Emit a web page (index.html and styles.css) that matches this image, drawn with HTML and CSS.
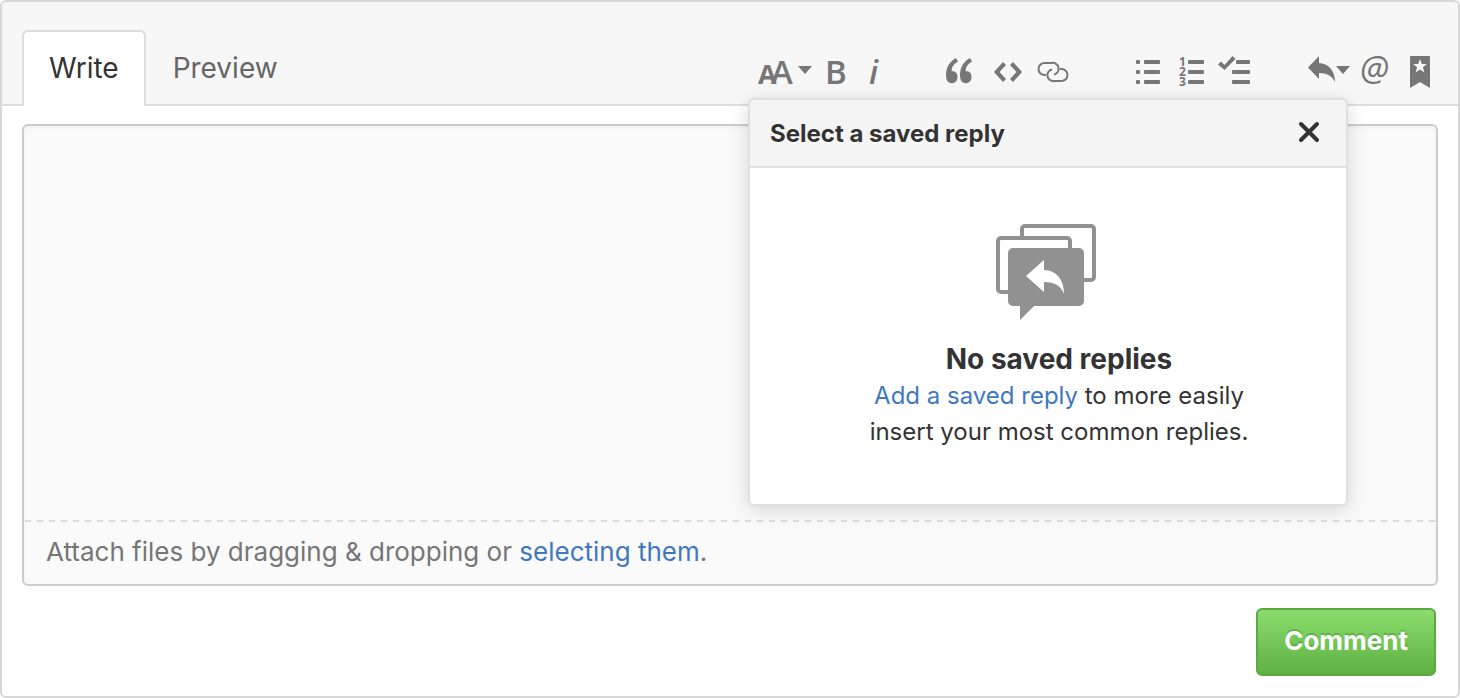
FILE: index.html
```html
<!DOCTYPE html>
<html lang="en">
<head>
<meta charset="utf-8">
<title>Comment</title>
<link rel="stylesheet" href="styles.css">
</head>
<body>
<form class="comment-box" onsubmit="return false">
  <header class="comment-head">
    <nav class="tabs">
      <button type="button" class="tab tab-active">Write</button>
      <button type="button" class="tab">Preview</button>
    </nav>
    <div class="toolbar">
      <div class="tool-group">
        <button type="button" class="tool" aria-label="Add header text">
          <svg width="60" height="40" viewBox="752 52 60 40"><text class="glyph glyph-small" x="758" y="84">A</text><text class="glyph glyph-large" x="771" y="84">A</text><path d="M798 66h14l-7 8z"/></svg>
        </button>
        <button type="button" class="tool" aria-label="Add bold text">
          <svg width="40" height="40" viewBox="812 52 40 40"><text class="glyph glyph-bold" x="825" y="84">B</text></svg>
        </button>
        <button type="button" class="tool" aria-label="Add italic text">
          <svg width="40" height="40" viewBox="852 52 40 40"><text class="glyph glyph-italic" x="869" y="84">i</text></svg>
        </button>
      </div>
      <div class="tool-group">
        <button type="button" class="tool" aria-label="Insert a quote">
          <svg width="46" height="40" viewBox="938 52 46 40"><path d="M956 58l2 3.500c-5 3-6.500 6-6.300 10 3.500-1 5.800 2 5.800 5.500 0 3.800-2.600 6.200-5.500 6.200-4 0-6-3-6-8 0-8 4-14 10-17.200zM970 58l2 3.500c-5 3-6.500 6-6.300 10 3.500-1 5.800 2 5.800 5.500 0 3.800-2.600 6.200-5.500 6.200-4 0-6-3-6-8 0-8 4-14 10-17.200z"/></svg>
        </button>
        <button type="button" class="tool" aria-label="Insert code">
          <svg width="46" height="40" viewBox="984 52 46 40"><path d="M1003 62l3 3-6.500 7 6.500 7-3 3-9-10zM1013 62l-3 3 6.500 7-6.500 7 3 3 9-10z"/></svg>
        </button>
        <button type="button" class="tool" aria-label="Add a link">
          <svg width="46" height="40" viewBox="1030 52 46 40"><path class="line" d="M1046 75h-1.500a5.800 5.800 0 0 1 0-12h7a5.800 5.800 0 0 1 2.500 11.500M1060 69h1.500a5.800 5.800 0 0 1 0 12h-7a5.800 5.800 0 0 1-2.500-11.500"/></svg>
        </button>
      </div>
      <div class="tool-group">
        <button type="button" class="tool" aria-label="Add a bulleted list">
          <svg width="44" height="40" viewBox="1122 52 44 40"><rect x="1136" y="60" width="4" height="4" rx="1"/><rect x="1136" y="70" width="4" height="4" rx="1"/><rect x="1136" y="80" width="4" height="4" rx="1"/><rect x="1144" y="60" width="16" height="4" rx="1"/><rect x="1144" y="70" width="16" height="4" rx="1"/><rect x="1144" y="80" width="16" height="4" rx="1"/></svg>
        </button>
        <button type="button" class="tool" aria-label="Add a numbered list">
          <svg width="44" height="40" viewBox="1166 52 44 40"><text class="glyph glyph-digit" x="1179" y="66">1</text><text class="glyph glyph-digit" x="1179" y="76">2</text><text class="glyph glyph-digit" x="1179" y="86">3</text><rect x="1188" y="60" width="16" height="4" rx="1"/><rect x="1188" y="70" width="16" height="4" rx="1"/><rect x="1188" y="80" width="16" height="4" rx="1"/></svg>
        </button>
        <button type="button" class="tool" aria-label="Add a task list">
          <svg width="48" height="40" viewBox="1210 52 48 40"><path d="M1218 64.500l3-3 3.500 3.500 8-9 3 3-11 11z"/><rect x="1236" y="60" width="14" height="4" rx="1"/><rect x="1232" y="70" width="18" height="4" rx="1"/><rect x="1232" y="80" width="18" height="4" rx="1"/></svg>
        </button>
      </div>
      <div class="tool-group">
        <button type="button" class="tool" aria-label="Insert a reply">
          <svg width="50" height="40" viewBox="1304 52 50 40"><path d="M1319 56v7c9 .5 16 7 16 19-3-6-8-9-16-9v6l-11-11.500zM1336 66h14l-7 8z"/></svg>
        </button>
        <button type="button" class="tool" aria-label="Mention a user">
          <svg width="44" height="40" viewBox="1354 52 44 40"><text class="glyph glyph-at" x="1360" y="81">@</text></svg>
        </button>
        <button type="button" class="tool" aria-label="Saved replies">
          <svg width="42" height="40" viewBox="1398 52 42 40"><path fill-rule="evenodd" d="M1411 56h18a1 1 0 0 1 1 1v31l-10-6-10 6v-31a1 1 0 0 1 1-1zM1420 59l-1.800 5-5.200.1 4.100 3.200-1.500 5.200 4.400-3 4.400 3-1.500-5.200 4.100-3.200-5.200-.1z"/></svg>
        </button>
      </div>
    </div>
    <section class="popover" aria-labelledby="popover-title">
      <div class="popover-head">
        <h2 class="popover-title" id="popover-title">Select a saved reply</h2>
        <button type="button" class="close" aria-label="Close">
          <svg width="24" height="24" viewBox="0 0 24 24"><path d="M4 3l16 16M20 3L4 19"/></svg>
        </button>
      </div>
      <div class="blank">
        <svg class="blank-icon" width="108" height="96" viewBox="994 224 108 96"><g fill="none" stroke="#919191" stroke-width="4"><path d="M1022 238v-9a3 3 0 0 1 3-3h66a3 3 0 0 1 3 3v48a3 3 0 0 1-3 3h-8"/><path d="M1070 249v-8a3 3 0 0 0-3-3h-66a3 3 0 0 0-3 3v48a3 3 0 0 0 3 3h8"/></g><path fill="#919191" d="M1013 248h66a5 5 0 0 1 5 5v48a5 5 0 0 1-5 5h-45l-14 14v-14h-7a5 5 0 0 1-5-5v-48a5 5 0 0 1 5-5z"/><path fill="#fff" d="M1044 260v10c12 .5 20 9 20 24-3-8-9-12-20-12v10l-18-16z"/></svg>
        <div class="blank-text">
          <h3 class="blank-title">No saved replies</h3>
          <p class="blank-copy"><a href="#">Add a saved reply</a> to more easily<br>insert your most common replies.</p>
        </div>
      </div>
    </section>
  </header>
  <div class="comment-body">
    <div class="editor">
      <textarea class="editor-input" aria-label="Comment"></textarea>
      <p class="attach">Attach files by dragging &amp; dropping or <a href="#">selecting them</a>.</p>
    </div>
    <button type="submit" class="submit">Comment</button>
  </div>
</form>
</body>
</html>
```
FILE: styles.css
```css
* {
  box-sizing: border-box;
}

body {
  margin: 0;
  background: #fff;
  color: #333;
  font-family: Inter, "Liberation Sans", sans-serif;
}

button {
  margin: 0;
  padding: 0;
  border: 0;
  background: none;
  font: inherit;
  cursor: pointer;
}

h2, h3, p {
  margin: 0;
}

a {
  color: #4078c0;
  text-decoration: none;
}

.comment-box {
  display: flex;
  flex-direction: column;
  min-height: 100vh;
  border: 2px solid #d8d8d8;
  border-radius: 6px;
}

.comment-head {
  position: relative;
  display: flex;
  justify-content: space-between;
  align-items: flex-end;
  padding: 28px 18px 0 20px;
  border-bottom: 2px solid #ddd;
  border-radius: 4px 4px 0 0;
  background: #f7f7f7;
}

.tabs {
  display: flex;
  margin-bottom: -2px;
}

.tab {
  height: 76px;
  padding: 0 25px 2px;
  border: 2px solid transparent;
  border-bottom: 0;
  border-radius: 6px 6px 0 0;
  color: #666;
  font-size: 28px;
}

.tab-active {
  border-color: #ddd;
  background: #fff;
  color: #333;
}

.toolbar {
  display: flex;
  gap: 46px;
  padding-bottom: 12px;
}

.tool-group {
  display: flex;
}

.tool svg {
  display: block;
  overflow: visible;
  fill: #767676;
}

.tool .line {
  fill: none;
  stroke: #767676;
  stroke-width: 2;
}

.glyph {
  font-family: "Open Sans", "Noto Sans", sans-serif;
  font-weight: 600;
}

.glyph-small {
  font-size: 27px;
  font-weight: 700;
}

.glyph-large,
.glyph-bold {
  font-size: 33px;
}

.glyph-italic {
  font-size: 33px;
  font-style: italic;
}

.glyph-digit {
  font-size: 12px;
  font-weight: 700;
}

.glyph-at {
  font-size: 34px;
  font-style: italic;
  font-weight: 400;
}

.popover {
  position: absolute;
  z-index: 1;
  top: 96px;
  right: 110px;
  width: 600px;
  border: 2px solid #e0e0e0;
  border-radius: 6px;
  background: #fff;
  box-shadow: 0 4px 20px rgba(0, 0, 0, 0.15);
}

.popover-head {
  display: flex;
  justify-content: space-between;
  align-items: center;
  height: 68px;
  padding: 0 25px 0 20px;
  border-bottom: 2px solid #e2e2e2;
  border-radius: 4px 4px 0 0;
  background: #f4f4f4;
}

.popover-title {
  font-size: 24px;
  font-weight: 700;
  text-shadow: 0 2px 0 #fff;
}

.close svg {
  display: block;
  fill: none;
  stroke: #333;
  stroke-width: 4;
  stroke-linecap: round;
}

.blank {
  display: flex;
  flex-direction: column;
  align-items: center;
  padding: 56px 20px 54px;
}

.blank-text {
  padding: 20px 0 0 22px;
  text-align: center;
}

.blank-title {
  font-size: 28px;
  font-weight: 700;
  line-height: 38px;
}

.blank-copy {
  font-size: 24px;
  line-height: 36px;
}

.comment-body {
  display: flex;
  flex: 1;
  flex-direction: column;
  gap: 22px;
  padding: 18px 20px 20px;
}

.editor {
  display: flex;
  flex: 1;
  flex-direction: column;
  border: 2px solid #ccc;
  border-radius: 6px;
  background: #fafafa;
  box-shadow: inset 0 2px 4px rgba(0, 0, 0, 0.04);
}

.editor-input {
  flex: 1;
  width: 100%;
  padding: 16px 22px;
  border: 0;
  outline: 0;
  background: transparent;
  color: #333;
  font: inherit;
  font-size: 26px;
  resize: none;
}

.attach {
  padding: 12px 22px;
  background: repeating-linear-gradient(90deg, transparent 0 1px, #ddd 1px 7px, transparent 7px 12px) 0 0 / 100% 2px no-repeat;
  color: #767676;
  font-size: 26px;
  line-height: 40px;
}

.submit {
  align-self: flex-end;
  height: 68px;
  margin-right: 2px;
  padding: 0 26px 2px;
  border: 2px solid #5ca941;
  border-radius: 6px;
  background: linear-gradient(#8add6d, #60b044);
  color: #fff;
  font-size: 26px;
  font-weight: 700;
  line-height: 32px;
  text-shadow: 0 -2px 0 rgba(0, 100, 0, 0.25);
}
```
